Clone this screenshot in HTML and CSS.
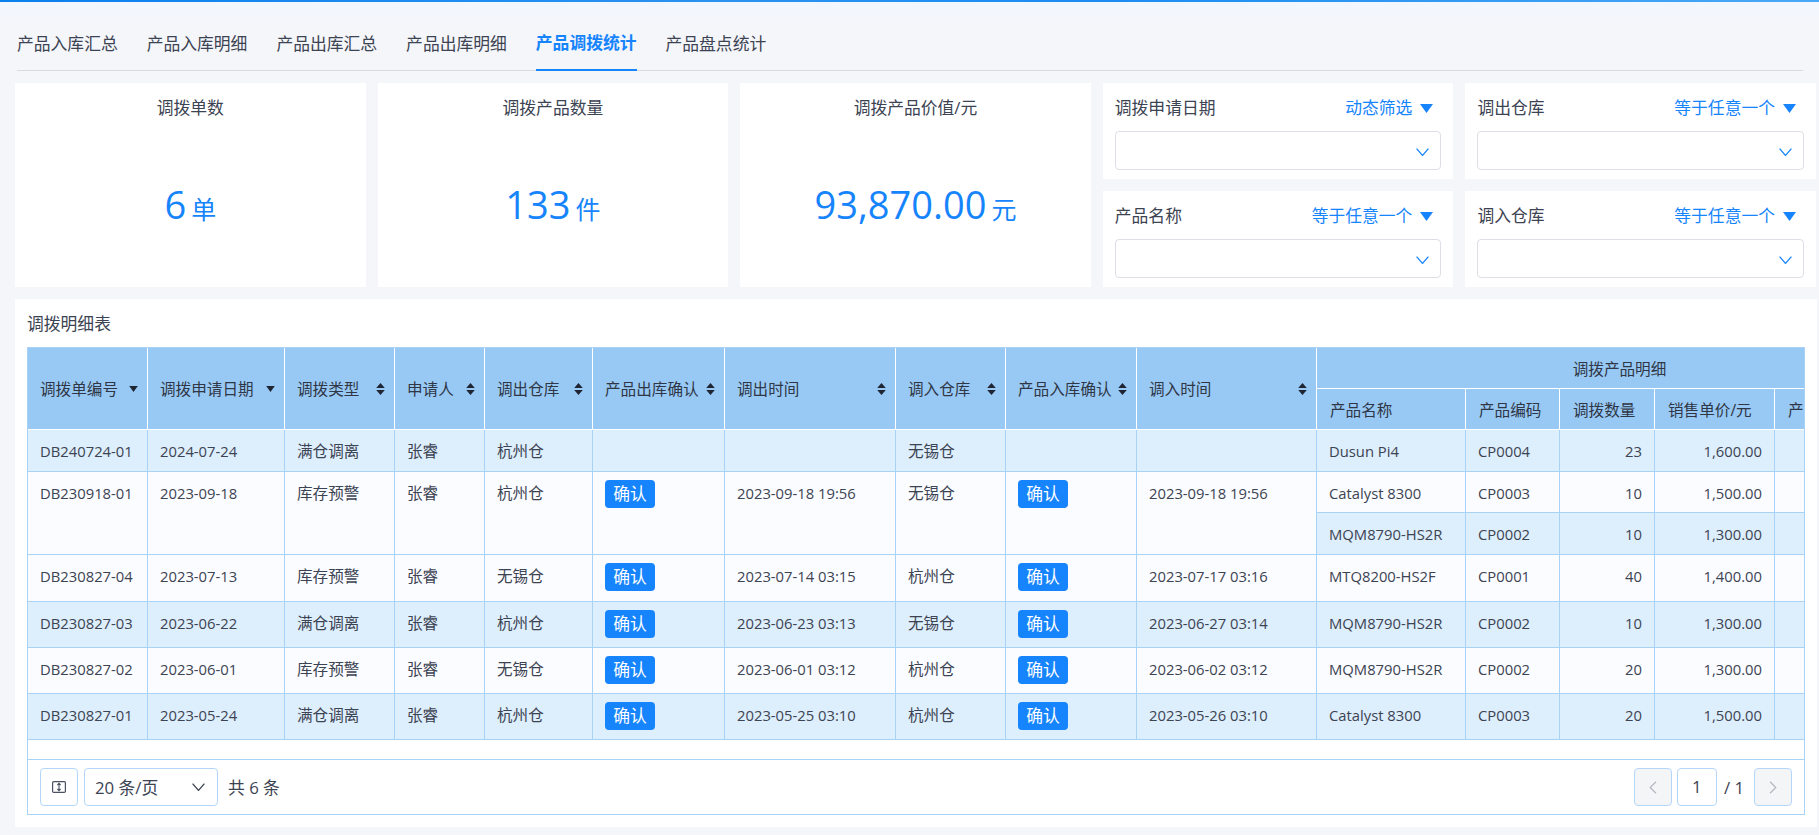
FILE: index.html
```html
<!DOCTYPE html>
<html lang="zh-CN">
<head>
<meta charset="utf-8">
<title>产品调拨统计</title>
<link rel="stylesheet" href="styles.css">
</head>
<body>
<svg class="defs" width="0" height="0" aria-hidden="true">
  <symbol id="sort" viewBox="0 0 9 12"><path d="M4.5 0 8.8 5H.2zM4.5 12 .2 7h8.6z"/></symbol>
  <symbol id="caret" viewBox="0 0 9 6"><path d="M.2 0h8.6L4.5 6z"/></symbol>
  <symbol id="tri" viewBox="0 0 13 9"><path d="M0 0h13L6.5 9z"/></symbol>
  <symbol id="chev" viewBox="0 0 13 8"><path d="M.6.6 6.5 7.4 12.4.6" fill="none" stroke="currentColor" stroke-width="1.3"/></symbol>
</svg>
<div class="topbar"></div>
<nav class="tabs">
  <a class="tab">产品入库汇总</a>
  <a class="tab">产品入库明细</a>
  <a class="tab">产品出库汇总</a>
  <a class="tab">产品出库明细</a>
  <a class="tab active">产品调拨统计</a>
  <a class="tab">产品盘点统计</a>
</nav>
<section class="summary">
  <div class="card stat">
    <div class="stat-title">调拨单数</div>
    <div class="stat-value"><span class="big">6</span><span class="unit">单</span></div>
  </div>
  <div class="card stat">
    <div class="stat-title">调拨产品数量</div>
    <div class="stat-value"><span class="big">133</span><span class="unit">件</span></div>
  </div>
  <div class="card stat">
    <div class="stat-title">调拨产品价值/元</div>
    <div class="stat-value"><span class="big">93,870.00</span><span class="unit">元</span></div>
  </div>
  <div class="card filter">
    <div class="filter-head"><span>调拨申请日期</span><span class="mode">动态筛选<svg class="tri"><use href="#tri"/></svg></span></div>
    <div class="select"><svg class="chev"><use href="#chev"/></svg></div>
  </div>
  <div class="card filter">
    <div class="filter-head"><span>调出仓库</span><span class="mode">等于任意一个<svg class="tri"><use href="#tri"/></svg></span></div>
    <div class="select"><svg class="chev"><use href="#chev"/></svg></div>
  </div>
  <div class="card filter">
    <div class="filter-head"><span>产品名称</span><span class="mode">等于任意一个<svg class="tri"><use href="#tri"/></svg></span></div>
    <div class="select"><svg class="chev"><use href="#chev"/></svg></div>
  </div>
  <div class="card filter">
    <div class="filter-head"><span>调入仓库</span><span class="mode">等于任意一个<svg class="tri"><use href="#tri"/></svg></span></div>
    <div class="select"><svg class="chev"><use href="#chev"/></svg></div>
  </div>
</section>
<section class="panel">
  <h2 class="panel-title">调拨明细表</h2>
  <div class="grid-box">
    <div class="table-scroll">
      <table class="data">
        <colgroup>
          <col class="c1"><col class="c2"><col class="c3"><col class="c4"><col class="c5"><col class="c6"><col class="c7"><col class="c8"><col class="c9"><col class="c10"><col class="c11"><col class="c12"><col class="c13"><col class="c14"><col class="c15">
        </colgroup>
        <thead>
          <tr class="h1">
            <th rowspan="2"><div class="th"><span>调拨单编号</span><svg class="caret"><use href="#caret"/></svg></div></th>
            <th rowspan="2"><div class="th"><span>调拨申请日期</span><svg class="caret"><use href="#caret"/></svg></div></th>
            <th rowspan="2"><div class="th"><span>调拨类型</span><svg class="sort"><use href="#sort"/></svg></div></th>
            <th rowspan="2"><div class="th"><span>申请人</span><svg class="sort"><use href="#sort"/></svg></div></th>
            <th rowspan="2"><div class="th"><span>调出仓库</span><svg class="sort"><use href="#sort"/></svg></div></th>
            <th rowspan="2"><div class="th"><span>产品出库确认</span><svg class="sort"><use href="#sort"/></svg></div></th>
            <th rowspan="2"><div class="th"><span>调出时间</span><svg class="sort"><use href="#sort"/></svg></div></th>
            <th rowspan="2"><div class="th"><span>调入仓库</span><svg class="sort"><use href="#sort"/></svg></div></th>
            <th rowspan="2"><div class="th"><span>产品入库确认</span><svg class="sort"><use href="#sort"/></svg></div></th>
            <th rowspan="2"><div class="th"><span>调入时间</span><svg class="sort"><use href="#sort"/></svg></div></th>
            <th colspan="5" class="group">调拨产品明细</th>
          </tr>
          <tr class="h2">
            <th>产品名称</th><th>产品编码</th><th>调拨数量</th><th>销售单价/元</th><th>产品价值/元</th>
          </tr>
        </thead>
        <tbody>
          <tr class="r42 alt">
            <td class="n">DB240724-01</td><td class="n">2024-07-24</td><td>满仓调离</td><td>张睿</td><td>杭州仓</td><td></td><td></td><td>无锡仓</td><td></td><td></td>
            <td class="n">Dusun Pi4</td><td class="n">CP0004</td><td class="n r">23</td><td class="n r">1,600.00</td><td></td>
          </tr>
          <tr class="r41">
            <td class="n" rowspan="2">DB230918-01</td><td class="n" rowspan="2">2023-09-18</td><td rowspan="2">库存预警</td><td rowspan="2">张睿</td><td rowspan="2">杭州仓</td><td rowspan="2"><span class="confirm">确认</span></td><td class="n" rowspan="2">2023-09-18 19:56</td><td rowspan="2">无锡仓</td><td rowspan="2"><span class="confirm">确认</span></td><td class="n" rowspan="2">2023-09-18 19:56</td>
            <td class="n">Catalyst 8300</td><td class="n">CP0003</td><td class="n r">10</td><td class="n r">1,500.00</td><td></td>
          </tr>
          <tr class="r42 sub-alt">
            <td class="n">MQM8790-HS2R</td><td class="n">CP0002</td><td class="n r">10</td><td class="n r">1,300.00</td><td></td>
          </tr>
          <tr class="r47">
            <td class="n">DB230827-04</td><td class="n">2023-07-13</td><td>库存预警</td><td>张睿</td><td>无锡仓</td><td><span class="confirm">确认</span></td><td class="n">2023-07-14 03:15</td><td>杭州仓</td><td><span class="confirm">确认</span></td><td class="n">2023-07-17 03:16</td>
            <td class="n">MTQ8200-HS2F</td><td class="n">CP0001</td><td class="n r">40</td><td class="n r">1,400.00</td><td></td>
          </tr>
          <tr class="r46 alt">
            <td class="n">DB230827-03</td><td class="n">2023-06-22</td><td>满仓调离</td><td>张睿</td><td>杭州仓</td><td><span class="confirm">确认</span></td><td class="n">2023-06-23 03:13</td><td>无锡仓</td><td><span class="confirm">确认</span></td><td class="n">2023-06-27 03:14</td>
            <td class="n">MQM8790-HS2R</td><td class="n">CP0002</td><td class="n r">10</td><td class="n r">1,300.00</td><td></td>
          </tr>
          <tr class="r46">
            <td class="n">DB230827-02</td><td class="n">2023-06-01</td><td>库存预警</td><td>张睿</td><td>无锡仓</td><td><span class="confirm">确认</span></td><td class="n">2023-06-01 03:12</td><td>杭州仓</td><td><span class="confirm">确认</span></td><td class="n">2023-06-02 03:12</td>
            <td class="n">MQM8790-HS2R</td><td class="n">CP0002</td><td class="n r">20</td><td class="n r">1,300.00</td><td></td>
          </tr>
          <tr class="r46 alt">
            <td class="n">DB230827-01</td><td class="n">2023-05-24</td><td>满仓调离</td><td>张睿</td><td>杭州仓</td><td><span class="confirm">确认</span></td><td class="n">2023-05-25 03:10</td><td>杭州仓</td><td><span class="confirm">确认</span></td><td class="n">2023-05-26 03:10</td>
            <td class="n">Catalyst 8300</td><td class="n">CP0003</td><td class="n r">20</td><td class="n r">1,500.00</td><td></td>
          </tr>
        </tbody>
      </table>
    </div>
    <div class="pager">
      <div class="pager-left">
        <button class="pbtn"><svg class="density" viewBox="0 0 14 12"><rect x=".6" y=".6" width="12.8" height="10.8" rx="1.2" fill="none" stroke="currentColor" stroke-width="1.2"/><path d="M7 2.6v6.8M5.4 4 7 2.4 8.6 4M5.4 8 7 9.6 8.6 8" fill="none" stroke="currentColor" stroke-width="1.1"/></svg></button>
        <div class="page-size"><span>20 条/页</span><svg class="chev dark"><use href="#chev"/></svg></div>
        <span class="total">共 6 条</span>
      </div>
      <div class="pager-right">
        <button class="pbtn off"><svg class="arrow" viewBox="0 0 8 13"><path d="M7 .8 1.2 6.5 7 12.2" fill="none" stroke="currentColor" stroke-width="1.2"/></svg></button>
        <div class="page-input">1</div>
        <span class="page-of">/ 1</span>
        <button class="pbtn off"><svg class="arrow" viewBox="0 0 8 13"><path d="M1 .8 6.8 6.5 1 12.2" fill="none" stroke="currentColor" stroke-width="1.2"/></svg></button>
      </div>
    </div>
  </div>
</section>
</body>
</html>
```
FILE: styles.css
```css
* { box-sizing: border-box; }
html, body { height: 100%; }
body {
  margin: 0;
  height: 835px;
  overflow: hidden;
  background: linear-gradient(#f2f7ff 0, #f4f6fa 28px);
  font-family: "Open Sans", "Noto Sans CJK SC", sans-serif;
  font-size: 16.8px;
  color: #3c4352;
}
.defs { position: absolute; }
.topbar {
  height: 2px;
  background: linear-gradient(90deg, #0a80ee 0, #2a93f2 40%, #1a8cf2 60%, #4aa9f6 100%);
}

/* tabs */
.tabs {
  display: flex;
  gap: 29px;
  height: 69px;
  margin: 0 16px 0 17px;
  border-bottom: 1px solid #d8dbe2;
}
.tab {
  display: flex;
  align-items: center;
  padding-top: 13px;
  height: 69px;
  white-space: nowrap;
}
.tab.active {
  color: #1684fc;
  font-weight: 700;
  border-bottom: 2px solid #1684fc;
}

/* summary */
.summary {
  display: grid;
  grid-template-columns: repeat(5, 1fr);
  grid-template-rows: 96px 96px;
  gap: 12px;
  margin: 12px 3px 0 15px;
}
.card { background: #fff; }
.stat {
  grid-row: span 2;
  display: flex;
  flex-direction: column;
  align-items: center;
}
.summary .stat:nth-child(1) { grid-column: 1; grid-row: 1 / 3; }
.summary .stat:nth-child(2) { grid-column: 2; grid-row: 1 / 3; }
.summary .stat:nth-child(3) { grid-column: 3; grid-row: 1 / 3; }
.stat-title { margin-top: 13px; line-height: 24px; }
.stat-value {
  display: flex;
  align-items: baseline;
  gap: 5px;
  margin-top: 58px;
  color: #1684fc;
  line-height: 52px;
}
.big { font-size: 38px; }
.unit { font-size: 25px; }
.filter { padding: 13px 12px 0; }
.filter-head {
  display: flex;
  justify-content: space-between;
  line-height: 24px;
}
.mode {
  display: flex;
  align-items: center;
  gap: 8px;
  padding-right: 8px;
  color: #1684fc;
}
.tri { width: 13px; height: 9px; fill: #1684fc; }
.select {
  display: flex;
  align-items: center;
  justify-content: flex-end;
  height: 39px;
  margin-top: 11px;
  padding: 3px 11px 0 0;
  border: 1px solid #dcdfe6;
  border-radius: 4px;
}
.chev { width: 13px; height: 8px; color: #1684fc; }

/* panel */
.panel {
  height: 528px;
  margin: 12px 2px 0 15px;
  padding: 13px 12px 12px;
  background: #fff;
}
.panel-title {
  margin: 0;
  height: 35px;
  font-size: 16.8px;
  font-weight: 400;
  line-height: 24px;
}
.grid-box {
  border: 1px solid #a9d2f7;
  height: 468px;
}
.table-scroll { height: 411px; overflow: hidden; }
.data {
  table-layout: fixed;
  width: 1895px;
  border-collapse: separate;
  border-spacing: 0;
  font-size: 15.6px;
}
.c1 { width: 120px; }
.c2 { width: 137px; }
.c3 { width: 110px; }
.c4 { width: 90px; }
.c5 { width: 108px; }
.c6 { width: 132px; }
.c7 { width: 171px; }
.c8 { width: 110px; }
.c9 { width: 131px; }
.c10 { width: 180px; }
.c11 { width: 149px; }
.c12 { width: 94px; }
.c13 { width: 95px; }
.c14 { width: 120px; }
.c15 { width: 148px; }
th {
  padding: 0 13px;
  background: #98c9f5;
  border-right: 1px solid #fff;
  border-bottom: 1px solid #fff;
  color: #2f3645;
  font-weight: 400;
  text-align: left;
  white-space: nowrap;
  overflow: hidden;
}
th:has(.th) { padding: 0 9px 0 12px; }
.group { text-align: center; }
.h1, .h2 { height: 41px; }
.th { display: flex; justify-content: space-between; align-items: center; }
.sort { width: 9px; height: 12px; fill: #1f2533; flex: none; }
.caret { width: 9px; height: 6px; fill: #1f2533; flex: none; }
td {
  padding: 9px 12px 0 12px;
  background: #fbfcff;
  border-right: 1px solid #a9d2f7;
  border-bottom: 1px solid #a9d2f7;
  vertical-align: top;
  line-height: 24px;
  white-space: nowrap;
  overflow: hidden;
}
.alt td, .sub-alt td { background: #ddeefc; }
td.n { font-size: 14.8px; }
td.r { text-align: right; }
.r41 { height: 41px; }
.r42 { height: 42px; }
.r46 { height: 46px; }
.r47 { height: 47px; }
.confirm {
  display: inline-block;
  width: 50px;
  height: 28px;
  margin-top: -1px;
  border-radius: 4px;
  background: #1684fc;
  color: #fff;
  font-size: 16.8px;
  line-height: 28px;
  text-align: center;
  vertical-align: top;
}

/* pager */
.pager {
  display: flex;
  justify-content: space-between;
  align-items: center;
  height: 55px;
  padding: 0 12px;
  border-top: 1px solid #a9d2f7;
}
.pager-left, .pager-right { display: flex; align-items: center; }
.pbtn {
  display: flex;
  align-items: center;
  justify-content: center;
  width: 38px;
  height: 38px;
  padding: 0;
  background: #fff;
  border: 1px solid #b4d7f8;
  border-radius: 4px;
  color: #4a5160;
}
.pbtn.off { background: #f4f5f7; color: #b3b7bf; }
.density { width: 14px; height: 12px; }
.arrow { width: 8px; height: 13px; }
.page-size {
  display: flex;
  align-items: center;
  justify-content: space-between;
  width: 134px;
  height: 38px;
  margin-left: 6px;
  padding: 0 11px 0 10px;
  border: 1px solid #b4d7f8;
  border-radius: 4px;
}
.chev.dark { width: 15px; height: 8px; color: #3c4352; }
.total { margin-left: 10px; }
.page-input {
  width: 40px;
  height: 38px;
  margin-left: 5px;
  border: 1px solid #b4d7f8;
  border-radius: 4px;
  line-height: 36px;
  text-align: center;
}
.page-of { margin: 0 10px 0 7px; }
```
